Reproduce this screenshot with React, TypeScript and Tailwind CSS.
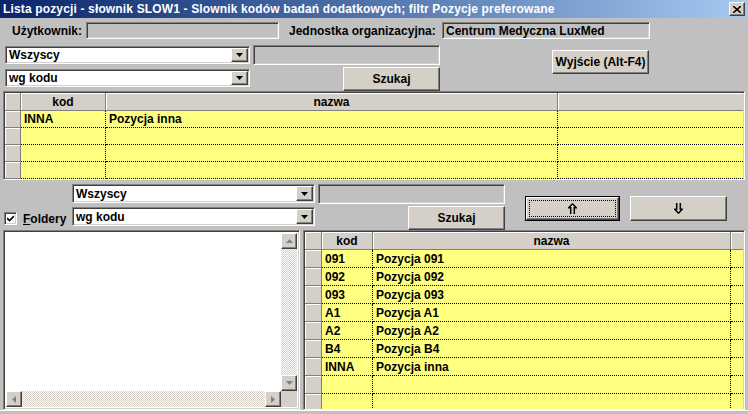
import type { ReactNode } from 'react';

const sunken =
  'border border-t-[#808080] border-l-[#808080] border-r-white border-b-white shadow-[inset_1px_1px_0_#404040,inset_-1px_-1px_0_#d4d0c8]';
const raised =
  'bg-[#d4d0c8] border border-t-white border-l-white border-r-[#404040] border-b-[#404040] shadow-[inset_-1px_-1px_0_#808080]';
const checker = 'bg-[repeating-conic-gradient(#d4d0c8_0_25%,#ffffff_0_50%)] bg-[length:2px_2px]';

function DownArrow() {
  return (
    <svg width="7" height="4" viewBox="0 0 7 4">
      <polygon points="0,0 7,0 3.5,4" fill="#000" />
    </svg>
  );
}

// double-shaft arrow like the one on the reorder buttons
function DoubleArrow({ up }: { up: boolean }) {
  return (
    <svg width="9" height="11" viewBox="0 0 9 11" className={up ? '' : 'rotate-180'}>
      <path d="M4.5 0.8 L8.3 4.8 H6.3 V11 M4.5 0.8 L0.7 4.8 H2.7 V11" stroke="#000" strokeWidth="1.5" fill="none" />
    </svg>
  );
}

function Combo({ value, className }: { value: string; className: string }) {
  return (
    <div className={`${sunken} bg-white flex items-stretch ${className}`}>
      <span className="flex-1 pl-[3px] flex items-center leading-none">{value}</span>
      <span className={`${raised} w-[17px] my-[1px] mr-[1px] flex items-center justify-center`}>
        <DownArrow />
      </span>
    </div>
  );
}

function Button({ children, className }: { children: ReactNode; className: string }) {
  return <div className={`${raised} flex items-center justify-center ${className}`}>{children}</div>;
}

type Row = { kod?: string; nazwa?: string };

function Grid({
  cols,
  rows,
  rowH,
  headH,
  className,
}: {
  cols: number[];
  rows: Row[];
  rowH: number;
  headH: number;
  className: string;
}) {
  const [ind, kodW, nazwaW] = cols;
  return (
    <div className={`${sunken} bg-[#c0c0c0] overflow-hidden flex flex-col p-[1px] ${className}`}>
      <div className="flex shrink-0" style={{ height: headH }}>
        <div className="bg-[#d4d0c8] border-r border-b border-[#808080] shadow-[inset_1px_1px_0_#fff]" style={{ width: ind }} />
        <div className="bg-[#d4d0c8] border-r border-b border-[#808080] shadow-[inset_1px_1px_0_#fff] flex items-center justify-center" style={{ width: kodW }}>
          kod
        </div>
        <div className="bg-[#d4d0c8] border-r border-b border-[#808080] shadow-[inset_1px_1px_0_#fff] flex items-center justify-center" style={{ width: nazwaW }}>
          nazwa
        </div>
        <div className="bg-[#d4d0c8] border-b border-[#808080] shadow-[inset_1px_1px_0_#fff] flex-1" />
      </div>
      {rows.map((r, i) => (
        <div key={i} className="flex shrink-0" style={{ height: rowH }}>
          <div className="bg-[#d4d0c8] border-r border-b border-[#808080] shadow-[inset_1px_1px_0_#fff]" style={{ width: ind }} />
          <div className="bg-[#ffff80] border-r border-b border-dotted border-black pl-[3px] flex items-center" style={{ width: kodW }}>
            {r.kod}
          </div>
          <div className="bg-[#ffff80] border-r border-b border-dotted border-black pl-[3px] flex items-center" style={{ width: nazwaW }}>
            {r.nazwa}
          </div>
          <div className="bg-[#ffff80] border-b border-dotted border-black flex-1" />
        </div>
      ))}
    </div>
  );
}

const topRows: Row[] = [{ kod: 'INNA', nazwa: 'Pozycja inna' }, {}, {}, {}, {}];
const bottomRows: Row[] = [
  { kod: '091', nazwa: 'Pozycja 091' },
  { kod: '092', nazwa: 'Pozycja 092' },
  { kod: '093', nazwa: 'Pozycja 093' },
  { kod: 'A1', nazwa: 'Pozycja A1' },
  { kod: 'A2', nazwa: 'Pozycja A2' },
  { kod: 'B4', nazwa: 'Pozycja B4' },
  { kod: 'INNA', nazwa: 'Pozycja inna' },
  {},
  {},
];

export default function App() {
  return (
    <div className="w-[748px] h-[414px] bg-[#c0c0c0] overflow-hidden flex flex-col font-['Liberation_Sans',Arial,sans-serif] text-[12px] font-bold text-black">
      {/* title bar */}
      <div className="h-[18px] shrink-0 flex items-center pl-[3px] pr-[3px] bg-gradient-to-r from-[#0a246a] to-[#a6caf0] text-white text-[12px] tracking-[0.15px]">
        <span className="flex-1 whitespace-nowrap">
          Lista pozycji - słownik SLOW1 - Slownik kodów badań dodatkowych; filtr Pozycje preferowane
        </span>
        <span className={`${raised} w-[16px] h-[14px] flex items-center justify-center text-black`}>
          <svg width="8" height="7" viewBox="0 0 8 7">
            <path d="M0 0 L8 7 M8 0 L0 7" stroke="#000" strokeWidth="1.6" />
          </svg>
        </span>
      </div>

      {/* user row */}
      <div className="h-[17px] mt-[4px] shrink-0 flex items-center">
        <span className="ml-[12px] w-[74px]">Użytkownik:</span>
        <div className={`${sunken} w-[193px] h-full`} />
        <span className="ml-[10px] w-[153px]">Jednostka organizacyjna:</span>
        <div className={`${sunken} w-[208px] h-full flex items-center pl-[3px]`}>Centrum Medyczna LuxMed</div>
      </div>

      {/* filter block */}
      <div className="h-[52px] shrink-0 flex pt-[6px]">
        <div className="ml-[5px] w-[245px] flex flex-col gap-[5px] pt-[1px]">
          <Combo value="Wszyscy" className="h-[18px]" />
          <Combo value="wg kodu" className="h-[18px]" />
        </div>
        <div className="ml-[3px] w-[187px] flex flex-col items-end">
          <div className={`${sunken} w-full h-[20px] bg-[#c0c0c0]`} />
          <Button className="mt-[2px] w-[97px] h-[24px]">Szukaj</Button>
        </div>
        <div className="ml-[112px] pt-[5px]">
          <Button className="w-[97px] h-[24px]">Wyjście (Alt-F4)</Button>
        </div>
      </div>

      {/* top grid */}
      <Grid cols={[16, 85, 452]} rows={topRows} rowH={17} headH={18} className="ml-[3px] w-[742px] h-[89px] shrink-0" />

      {/* second filter block */}
      <div className="h-[50px] shrink-0 flex">
        <div className="w-[72px] flex items-end pb-[5px] pl-[4px]">
          <span className={`${sunken} bg-white w-[13px] h-[13px] flex items-center justify-center`}>
            <svg width="7" height="7" viewBox="0 0 7 7">
              <path d="M0 3 L2.5 5.5 L7 1" stroke="#000" strokeWidth="1.6" fill="none" />
            </svg>
          </span>
          <span className="ml-[6px] leading-none">
            <span className="underline">F</span>oldery
          </span>
        </div>
        <div className="w-[243px] flex flex-col gap-[4px] pt-[4px]">
          <Combo value="Wszyscy" className="h-[19px]" />
          <Combo value="wg kodu" className="h-[19px]" />
        </div>
        <div className="ml-[3px] w-[187px] flex flex-col items-end pt-[4px]">
          <div className={`${sunken} w-full h-[20px] bg-[#c0c0c0]`} />
          <Button className="mt-[2px] w-[97px] h-[24px]">Szukaj</Button>
        </div>
        <div className="ml-[20px] pt-[16px]">
          <div className="border border-black w-[95px] h-[25px] flex">
            <div className={`${raised} flex-1 p-[2px]`}>
              <div className="w-full h-full border border-dotted border-black flex items-center justify-center">
                <DoubleArrow up />
              </div>
            </div>
          </div>
        </div>
        <div className="ml-[10px] pt-[16px]">
          <Button className="w-[97px] h-[25px]">
            <DoubleArrow up={false} />
          </Button>
        </div>
      </div>

      {/* bottom area */}
      <div className="h-[180px] shrink-0 flex">
        <div className={`${sunken} ml-[3px] w-[297px] h-full bg-white p-[2px] flex flex-col`}>
          <div className="flex-1 flex">
            <div className="flex-1" />
            <div className="w-[16px] flex flex-col">
              <Button className="h-[16px] shrink-0">
                <svg width="7" height="4" viewBox="0 0 7 4">
                  <polygon points="0,4 7,4 3.5,0" fill="#808080" />
                </svg>
              </Button>
              <div className={`flex-1 ${checker}`} />
              <Button className="h-[16px] shrink-0">
                <svg width="7" height="4" viewBox="0 0 7 4">
                  <polygon points="0,0 7,0 3.5,4" fill="#808080" />
                </svg>
              </Button>
            </div>
          </div>
          <div className="h-[16px] flex shrink-0">
            <Button className="w-[16px] shrink-0">
              <svg width="4" height="7" viewBox="0 0 4 7">
                <polygon points="4,0 4,7 0,3.5" fill="#808080" />
              </svg>
            </Button>
            <div className={`flex-1 ${checker}`} />
            <Button className="w-[16px] shrink-0">
              <svg width="4" height="7" viewBox="0 0 4 7">
                <polygon points="0,0 0,7 4,3.5" fill="#808080" />
              </svg>
            </Button>
            <div className="w-[16px] bg-[#d4d0c8]" />
          </div>
        </div>
        <Grid cols={[17, 51, 358]} rows={bottomRows} rowH={18} headH={18} className="ml-[3px] w-[442px] h-full" />
      </div>
      <div className="flex-1 border-t border-white" />
    </div>
  );
}
